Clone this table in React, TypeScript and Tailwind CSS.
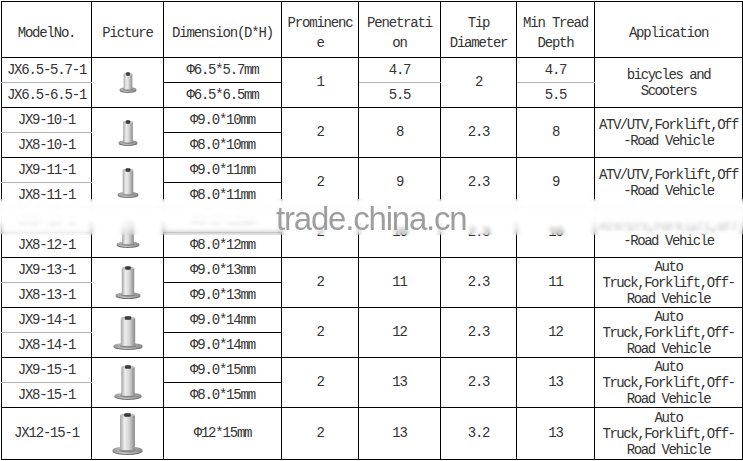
import { useId } from "react";

type Spec = {
  models: string[];
  dims: string[];
  prom: string;
  pen: string[];
  tip: string;
  tread: string[];
  app: string[];
  stud: { w: number; h: number };
};

const ROWS: Spec[] = [
  { models: ["JX6.5-5.7-1", "JX6.5-6.5-1"], dims: ["Φ6.5*5.7mm", "Φ6.5*6.5mm"], prom: "1", pen: ["4.7", "5.5"], tip: "2", tread: ["4.7", "5.5"], app: ["bicycles and", "Scooters"], stud: { w: 18, h: 21 } },
  { models: ["JX9-10-1", "JX8-10-1"], dims: ["Φ9.0*10mm", "Φ8.0*10mm"], prom: "2", pen: ["8"], tip: "2.3", tread: ["8"], app: ["ATV/UTV,Forklift,Off", "-Road Vehicle"], stud: { w: 20, h: 26 } },
  { models: ["JX9-11-1", "JX8-11-1"], dims: ["Φ9.0*11mm", "Φ8.0*11mm"], prom: "2", pen: ["9"], tip: "2.3", tread: ["9"], app: ["ATV/UTV,Forklift,Off", "-Road Vehicle"], stud: { w: 22, h: 30 } },
  { models: ["JX9-12-1", "JX8-12-1"], dims: ["Φ9.0*12mm", "Φ8.0*12mm"], prom: "2", pen: ["10"], tip: "2.3", tread: ["10"], app: ["ATV/UTV,Forklift,Off", "-Road Vehicle"], stud: { w: 24, h: 31 } },
  { models: ["JX9-13-1", "JX8-13-1"], dims: ["Φ9.0*13mm", "Φ9.0*13mm"], prom: "2", pen: ["11"], tip: "2.3", tread: ["11"], app: ["Auto", "Truck,Forklift,Off-", "Road Vehicle"], stud: { w: 26, h: 33 } },
  { models: ["JX9-14-1", "JX8-14-1"], dims: ["Φ9.0*14mm", "Φ9.0*14mm"], prom: "2", pen: ["12"], tip: "2.3", tread: ["12"], app: ["Auto", "Truck,Forklift,Off-", "Road Vehicle"], stud: { w: 30, h: 34 } },
  { models: ["JX9-15-1", "JX8-15-1"], dims: ["Φ9.0*15mm", "Φ8.0*15mm"], prom: "2", pen: ["13"], tip: "2.3", tread: ["13"], app: ["Auto", "Truck,Forklift,Off-", "Road Vehicle"], stud: { w: 28, h: 35 } },
  { models: ["JX12-15-1"], dims: ["Φ12*15mm"], prom: "2", pen: ["13"], tip: "3.2", tread: ["13"], app: ["Auto", "Truck,Forklift,Off-", "Road Vehicle"], stud: { w: 31, h: 42 } },
];

const cell = "border border-black text-center align-middle p-0";
const head = "border border-black text-center align-middle p-0 pt-[6px] font-normal";
const grayBottom = "border-b-[#b4b4b4]";
const grayTop = "border-t-[#b4b4b4]";

function Stud({ w, h }: { w: number; h: number }) {
  const id = useId().replace(/:/g, "");
  const bw = w * 0.48;
  const bx = (w - bw) / 2;
  const fry = Math.max(2.5, h * 0.09);
  const fcy = h - fry - 1;
  return (
    <svg width={w} height={h} viewBox={`0 0 ${w} ${h}`} className="mx-auto block">
      <defs>
        <linearGradient id={`b${id}`} x1="0" x2="1" y1="0" y2="0">
          <stop offset="0" stopColor="#a4a4a4" />
          <stop offset="0.3" stopColor="#eeeeee" />
          <stop offset="0.6" stopColor="#d4d4d4" />
          <stop offset="1" stopColor="#8a8a8a" />
        </linearGradient>
        <linearGradient id={`f${id}`} x1="0" x2="1" y1="0" y2="0">
          <stop offset="0" stopColor="#969696" />
          <stop offset="0.4" stopColor="#c8c8c8" />
          <stop offset="1" stopColor="#888" />
        </linearGradient>
      </defs>
      <ellipse cx={w / 2} cy={fcy + 1} rx={w / 2 - 0.5} ry={fry} fill="#707070" />
      <ellipse cx={w / 2} cy={fcy} rx={w / 2 - 0.5} ry={fry} fill={`url(#f${id})`} />
      <ellipse cx={w / 2} cy={fcy} rx={bw / 2 + 1} ry={fry * 0.55} fill="#858585" />
      <rect x={bx} y={2} width={bw} height={fcy - 2} fill={`url(#b${id})`} />
      <ellipse cx={w / 2} cy={2.2} rx={bw / 2} ry={1.6} fill="#c0c0c0" />
      <rect x={w / 2 - bw * 0.22} y={0.3} width={bw * 0.44} height={3.4} rx={1} fill="#3a3a3a" />
    </svg>
  );
}

function Lines({ lines }: { lines: string[] }) {
  return (
    <div className="leading-[16px] tracking-[-1.45px]">
      {lines.map((l, i) => (
        <div key={i} className="whitespace-pre">{l}</div>
      ))}
    </div>
  );
}

function ModelRows({ r }: { r: Spec }) {
  if (r.models.length === 1) {
    return (
      <tr className="h-[52px]">
        <td className={cell}>{r.models[0]}</td>
        <td className={cell}><Stud {...r.stud} /></td>
        <td className={cell}>{r.dims[0]}</td>
        <td className={cell}>{r.prom}</td>
        <td className={cell}>{r.pen[0]}</td>
        <td className={cell}>{r.tip}</td>
        <td className={cell}>{r.tread[0]}</td>
        <td className={cell}><Lines lines={r.app} /></td>
      </tr>
    );
  }
  const split = r.pen.length === 2;
  return (
    <>
      <tr className="h-[25px]">
        <td className={`${cell} ${grayBottom}`}>{r.models[0]}</td>
        <td className={cell} rowSpan={2}><Stud {...r.stud} /></td>
        <td className={cell}>{r.dims[0]}</td>
        <td className={cell} rowSpan={2}>{r.prom}</td>
        {split ? <td className={`${cell} ${grayBottom}`}>{r.pen[0]}</td> : <td className={cell} rowSpan={2}>{r.pen[0]}</td>}
        <td className={cell} rowSpan={2}>{r.tip}</td>
        {split ? <td className={`${cell} ${grayBottom}`}>{r.tread[0]}</td> : <td className={cell} rowSpan={2}>{r.tread[0]}</td>}
        <td className={cell} rowSpan={2}><Lines lines={r.app} /></td>
      </tr>
      <tr className="h-[25px]">
        <td className={`${cell} ${grayTop}`}>{r.models[1]}</td>
        <td className={cell}>{r.dims[1]}</td>
        {split && <td className={`${cell} ${grayTop}`}>{r.pen[1]}</td>}
        {split && <td className={`${cell} ${grayTop}`}>{r.tread[1]}</td>}
      </tr>
    </>
  );
}

export default function App() {
  return (
    <div className="relative w-[743px] h-[461px] overflow-hidden bg-white">
      <table className="ml-px mt-px table-fixed border-collapse w-[741px] font-['Liberation_Mono',monospace] text-[14px] tracking-[-1.2px] text-[#333]">
        <colgroup>
          <col className="w-[90px]" />
          <col className="w-[72px]" />
          <col className="w-[118px]" />
          <col className="w-[77px]" />
          <col className="w-[82px]" />
          <col className="w-[76px]" />
          <col className="w-[78px]" />
          <col className="w-[148px]" />
        </colgroup>
        <thead>
          <tr className="h-[56px] leading-[20px]">
            <th className={head}>ModelNo.</th>
            <th className={head}>Picture</th>
            <th className={head}>Dimension(D*H)</th>
            <th className={head}>Prominenc<br />e</th>
            <th className={head}>Penetrati<br />on</th>
            <th className={head}>Tip<br />Diameter</th>
            <th className={head}>Min Tread<br />Depth</th>
            <th className={head}>Application</th>
          </tr>
        </thead>
        <tbody>
          {ROWS.map((r, i) => (
            <ModelRows key={i} r={r} />
          ))}
        </tbody>
      </table>

      {/* watermark band */}
      <div className="pointer-events-none absolute left-0 right-0 top-[199px] h-[36px] backdrop-blur-[2px] bg-[linear-gradient(to_bottom,rgba(255,255,255,0.3)_0%,rgba(255,255,255,0.96)_10%,rgba(255,255,255,0.96)_58%,rgba(255,255,255,0.68)_76%,rgba(255,255,255,0.3)_92%,rgba(255,255,255,0)_100%)]" />
      <div className="pointer-events-none absolute left-[276px] top-[202px] font-['Liberation_Sans',Arial,sans-serif] text-[33px] leading-[33px] tracking-[-1.2px] text-[#9e9e9e]">
        trade.china.cn
      </div>
    </div>
  );
}
